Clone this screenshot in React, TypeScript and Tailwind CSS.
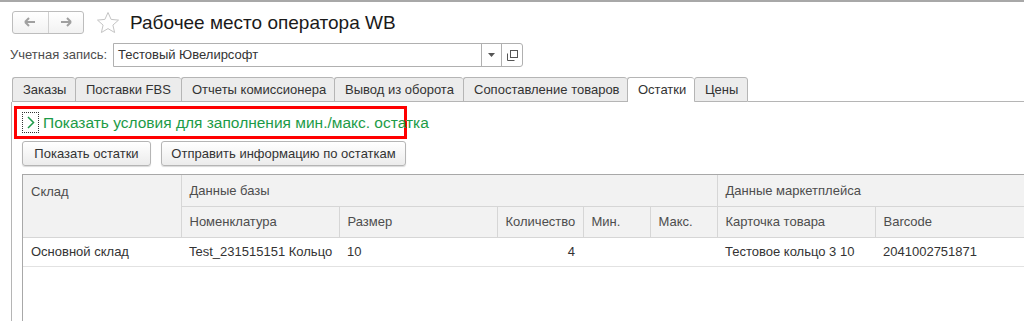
import React from 'react';

const tabs = [
  { label: 'Заказы', w: 'w-[63px]' },
  { label: 'Поставки FBS', w: 'w-[106px]' },
  { label: 'Отчеты комиссионера', w: 'w-[153px]' },
  { label: 'Вывод из оборота', w: 'w-[129px]' },
  { label: 'Сопоставление товаров', w: 'w-[164px]' },
  { label: 'Остатки', w: 'w-[67px]', active: true },
  { label: 'Цены', w: 'w-[54px]' },
];

const thCls =
  'bg-[#f2f2f2] border-r border-b border-[#d6d6d6] text-left font-normal text-[#4d4d4d] px-[8px] h-[31px] align-middle whitespace-nowrap';

export default function App() {
  return (
    <div
      className="w-[1024px] h-[321px] overflow-hidden bg-white text-[13px] text-[#333]"
      style={{ fontFamily: '"Liberation Sans", Arial, sans-serif' }}
    >
      <div className="h-[2px] bg-[#a8a8a8]" />

      {/* title bar */}
      <div className="flex items-center h-[37px] pl-[12px] pt-[3px]">
        <div className="flex h-[23px] w-[72px] border border-[#bdbdbd] rounded-[3px] bg-gradient-to-b from-white to-[#f2f2f2]">
          <div className="flex-1 flex items-center justify-center border-r border-[#d0d0d0]">
            <svg width="12" height="10" viewBox="0 0 12 10">
              <path d="M1 5h10M1 5l4-4M1 5l4 4" stroke="#a0a0a0" strokeWidth="2" fill="none" />
            </svg>
          </div>
          <div className="flex-1 flex items-center justify-center">
            <svg width="12" height="10" viewBox="0 0 12 10">
              <path d="M1 5h10M11 5l-4-4M11 5l-4 4" stroke="#a0a0a0" strokeWidth="2" fill="none" />
            </svg>
          </div>
        </div>
        <svg className="ml-[12px]" width="24" height="23" viewBox="0 0 24 23">
          <path
            d="M12 1.5l3.1 6.9 7.4.7-5.6 5 1.7 7.4L12 17.6l-6.6 3.9 1.7-7.4-5.6-5 7.4-.7z"
            fill="none"
            stroke="#c4c4c4"
            strokeWidth="1"
          />
        </svg>
        <div className="ml-[10px] text-[19px] text-[#1a1a1a] leading-none">Рабочее место оператора WB</div>
      </div>

      {/* account */}
      <div className="flex items-center h-[24px] mt-[4px] pl-[10px]">
        <span className="text-[#4d4d4d] w-[103px]">Учетная запись:</span>
        <div className="flex h-[24px] border border-[#b0b0b0] rounded-r-[3px]">
          <div className="w-[367px] flex items-center pl-[4px] text-[#333]">Тестовый Ювелирсофт</div>
          <div className="w-[20px] border-l border-[#b0b0b0] flex items-center justify-center">
            <svg width="7" height="4" viewBox="0 0 7 4">
              <path d="M0 0h7L3.5 4z" fill="#555" />
            </svg>
          </div>
          <div className="w-[21px] border-l border-[#b0b0b0] flex items-center justify-center">
            <svg width="11" height="11" viewBox="0 0 11 11">
              <rect x="3.5" y="0.5" width="7" height="7" fill="none" stroke="#555" />
              <path d="M0.5 3.5v7h7" fill="none" stroke="#555" />
            </svg>
          </div>
        </div>
      </div>

      {/* tabs */}
      <div className="flex mt-[10px] pl-[12px]">
        {tabs.map((t, i) => (
          <div
            key={t.label}
            className={`${t.w} h-[25px] flex items-center pl-[10px] border-t border-l border-[#b5b5b5] rounded-t-[3px] whitespace-nowrap ${
              i === tabs.length - 1 ? 'border-r' : ''
            } ${t.active ? 'bg-white' : 'bg-[#ececec] border-b'}`}
          >
            {t.label}
          </div>
        ))}
        <div className="flex-1 border-b border-[#b5b5b5]" />
      </div>

      {/* panel */}
      <div className="ml-[11px] border-l border-[#b5b5b5] h-[220px] pt-[4px] pl-[2px]">
        <div className="flex items-center w-[393px] h-[33px] border-[3px] border-[#ff0000] pl-[5px]">
          <div className="shrink-0 w-[17px] h-[21px] border border-dotted border-[#333] flex items-center justify-center">
            <svg width="8" height="13" viewBox="0 0 8 13">
              <path d="M1 1l5.5 5.5L1 12" fill="none" stroke="#1f9a4a" strokeWidth="1.5" />
            </svg>
          </div>
          <span className="ml-[4px] text-[15.5px] text-[#1c9b47] whitespace-nowrap">
            Показать условия для заполнения мин./макс. остатка
          </span>
        </div>

        <div className="flex gap-[10px] mt-[2px] pl-[8px]">
          <button className="w-[129px] h-[25px] border border-[#b5b5b5] rounded-[3px] bg-gradient-to-b from-white to-[#ececec] shadow-[0_1px_1px_rgba(0,0,0,0.15)] text-[#333]">
            Показать остатки
          </button>
          <button className="w-[245px] h-[25px] border border-[#b5b5b5] rounded-[3px] bg-gradient-to-b from-white to-[#ececec] shadow-[0_1px_1px_rgba(0,0,0,0.15)] text-[#333]">
            Отправить информацию по остаткам
          </button>
        </div>

        <div className="ml-[8px] mt-[8px] border-l border-t border-[#a8a8a8] h-[160px] overflow-hidden">
          <table className="table-fixed border-collapse w-[1100px]">
            <colgroup>
              <col className="w-[158px]" />
              <col className="w-[158px]" />
              <col className="w-[158px]" />
              <col className="w-[86px]" />
              <col className="w-[67px]" />
              <col className="w-[67px]" />
              <col className="w-[158px]" />
              <col className="w-[248px]" />
            </colgroup>
            <thead>
              <tr>
                <th rowSpan={2} className={`${thCls} align-top pt-[7px]`}>
                  Склад
                </th>
                <th colSpan={5} className={thCls}>
                  Данные базы
                </th>
                <th colSpan={2} className={thCls}>
                  Данные маркетплейса
                </th>
              </tr>
              <tr>
                <th className={thCls}>Номенклатура</th>
                <th className={thCls}>Размер</th>
                <th className={thCls}>Количество</th>
                <th className={thCls}>Мин.</th>
                <th className={thCls}>Макс.</th>
                <th className={thCls}>Карточка товара</th>
                <th className={thCls}>Barcode</th>
              </tr>
            </thead>
            <tbody>
              <tr className="h-[29px] border-b border-[#e2e2e2]">
                <td className="px-[8px] whitespace-nowrap">Основной склад</td>
                <td className="px-[8px] whitespace-nowrap">Test_231515151 Кольцо</td>
                <td className="px-[8px]">10</td>
                <td className="px-[8px] text-right">4</td>
                <td />
                <td />
                <td className="px-[8px] whitespace-nowrap">Тестовое кольцо 3 10</td>
                <td className="px-[8px]">2041002751871</td>
              </tr>
            </tbody>
          </table>
        </div>
      </div>
    </div>
  );
}
